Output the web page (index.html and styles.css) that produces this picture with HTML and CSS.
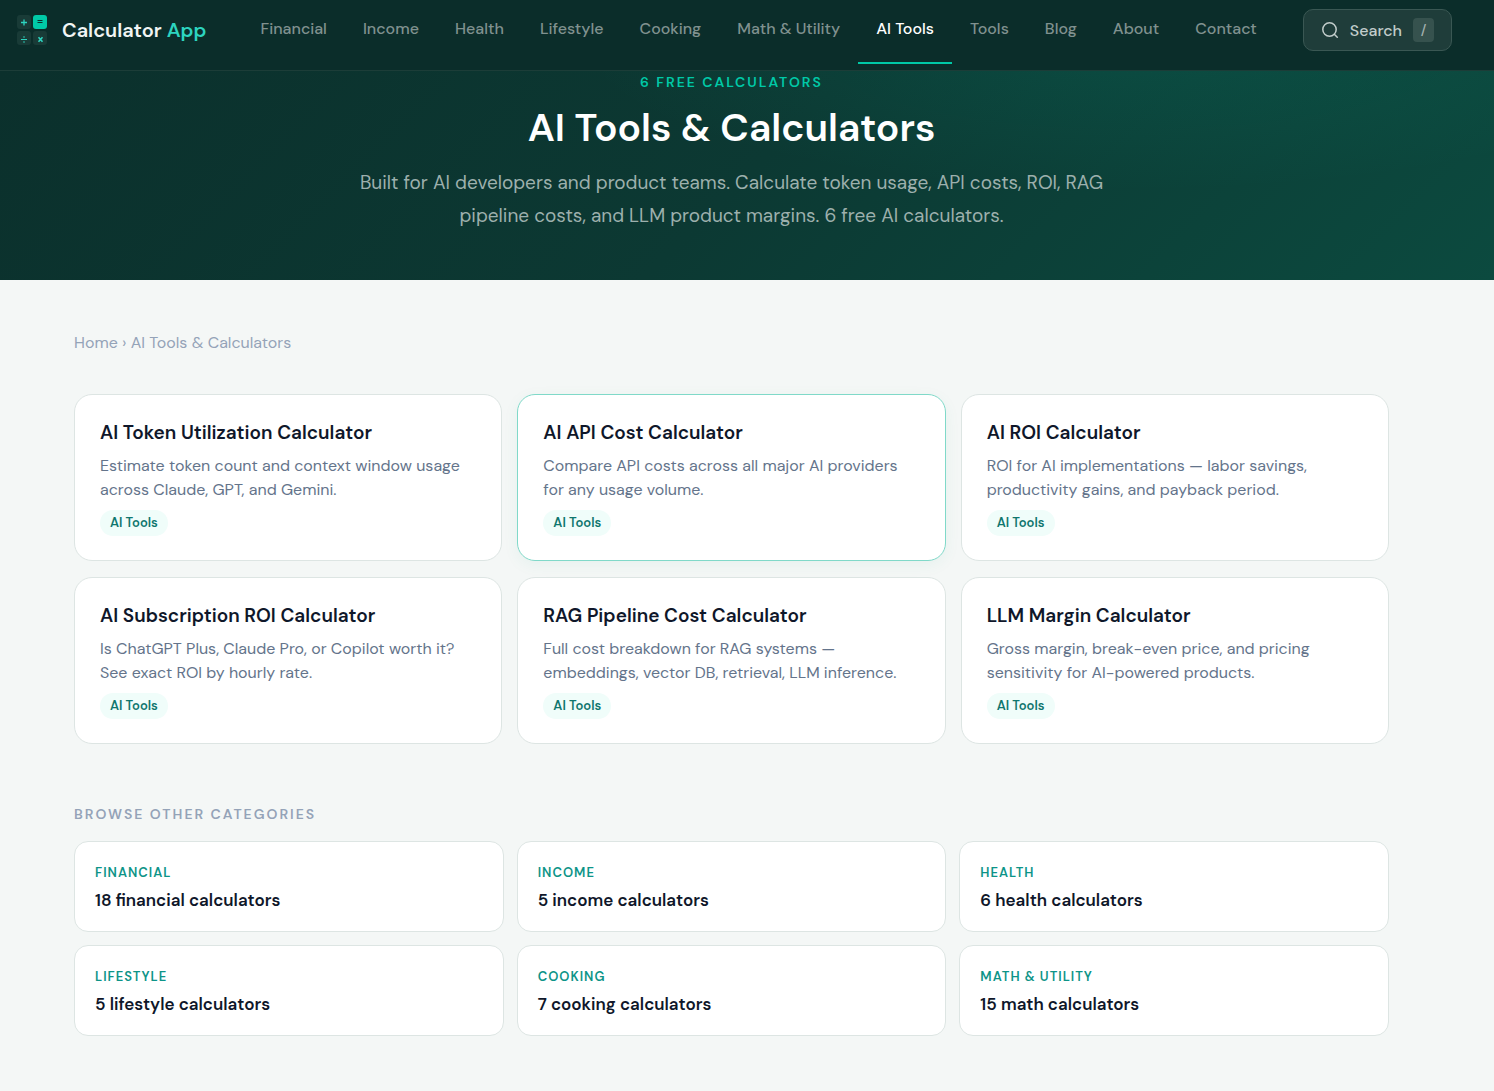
FILE: index.html
```html
<!DOCTYPE html>
<html lang="en">
<head>
    <meta charset="utf-8">
    <meta name="viewport" content="width=device-width, initial-scale=1">
    <title>AI Tools &amp; Calculators</title>
    <link rel="stylesheet" href="styles.css">
</head>
<body>
<header class="site-header">
    <a class="logo" href="#">
        <svg class="logo-icon" width="30" height="30" viewBox="0 0 30 30" aria-hidden="true">
            <g fill="#193b37">
                <rect width="14" height="14" rx="3"/>
                <rect y="16" width="14" height="14" rx="3"/>
                <rect x="16" y="16" width="14" height="14" rx="3"/>
            </g>
            <rect x="16" width="14" height="14" rx="3" fill="#00c9a7"/>
            <g stroke="#2dd4bf" fill="none">
                <path d="M4 7.500h6M7 4.500v6" stroke-width="1.300"/>
                <path d="M4 24.500h6"/>
                <path d="M21.500 22.300l4 4.500M25.500 22.300l-4 4.500" stroke-width="1.600"/>
            </g>
            <circle cx="7" cy="22" r=".8" fill="#2dd4bf"/>
            <circle cx="7" cy="27" r=".8" fill="#2dd4bf"/>
            <path d="M20.500 5.500h5M20.500 7.500h5" stroke="#0b2d2a"/>
        </svg>
        <span>Calculator <span class="logo-accent">App</span></span>
    </a>
    <nav class="main-nav">
        <a href="#">Financial</a>
        <a href="#">Income</a>
        <a href="#">Health</a>
        <a href="#">Lifestyle</a>
        <a href="#">Cooking</a>
        <a href="#">Math &amp; Utility</a>
        <a href="#" class="active">AI Tools</a>
        <a href="#">Tools</a>
        <a href="#">Blog</a>
        <a href="#">About</a>
        <a href="#">Contact</a>
    </nav>
    <button type="button" class="search-btn">
        <svg width="18" height="18" viewBox="0 0 18 18" fill="none" stroke="currentColor" stroke-width="1.500" stroke-linecap="round" aria-hidden="true">
            <circle cx="8.500" cy="8.500" r="6.700"/>
            <path d="M13.300 13.300l3 3"/>
        </svg>
        <span>Search</span>
        <kbd>/</kbd>
    </button>
</header>

<section class="hero">
    <p class="hero-label">6 Free Calculators</p>
    <h1>AI Tools &amp; Calculators</h1>
    <p class="hero-text">Built for AI developers and product teams. Calculate token usage, API costs, ROI, RAG pipeline costs, and LLM product margins. 6 free AI calculators.</p>
</section>

<main class="content">
    <div class="breadcrumb"><a href="#">Home</a> › AI Tools &amp; Calculators</div>

    <div class="calc-grid">
        <a class="calc-card" href="#">
            <h2>AI Token Utilization Calculator</h2>
            <p>Estimate token count and context window usage across Claude, GPT, and Gemini.</p>
            <span class="tag">AI Tools</span>
        </a>
        <a class="calc-card highlighted" href="#">
            <h2>AI API Cost Calculator</h2>
            <p>Compare API costs across all major AI providers for any usage volume.</p>
            <span class="tag">AI Tools</span>
        </a>
        <a class="calc-card" href="#">
            <h2>AI ROI Calculator</h2>
            <p>ROI for AI implementations — labor savings, productivity gains, and payback period.</p>
            <span class="tag">AI Tools</span>
        </a>
        <a class="calc-card" href="#">
            <h2>AI Subscription ROI Calculator</h2>
            <p>Is ChatGPT Plus, Claude Pro, or Copilot worth it? See exact ROI by hourly rate.</p>
            <span class="tag">AI Tools</span>
        </a>
        <a class="calc-card" href="#">
            <h2>RAG Pipeline Cost Calculator</h2>
            <p>Full cost breakdown for RAG systems — embeddings, vector DB, retrieval, LLM inference.</p>
            <span class="tag">AI Tools</span>
        </a>
        <a class="calc-card" href="#">
            <h2>LLM Margin Calculator</h2>
            <p>Gross margin, break-even price, and pricing sensitivity for AI-powered products.</p>
            <span class="tag">AI Tools</span>
        </a>
    </div>

    <h2 class="section-label">Browse Other Categories</h2>
    <div class="cat-grid">
        <a class="cat-card" href="#"><span class="cat-name">Financial</span><span class="cat-count">18 financial calculators</span></a>
        <a class="cat-card" href="#"><span class="cat-name">Income</span><span class="cat-count">5 income calculators</span></a>
        <a class="cat-card" href="#"><span class="cat-name">Health</span><span class="cat-count">6 health calculators</span></a>
        <a class="cat-card" href="#"><span class="cat-name">Lifestyle</span><span class="cat-count">5 lifestyle calculators</span></a>
        <a class="cat-card" href="#"><span class="cat-name">Cooking</span><span class="cat-count">7 cooking calculators</span></a>
        <a class="cat-card" href="#"><span class="cat-name">Math &amp; Utility</span><span class="cat-count">15 math calculators</span></a>
    </div>
</main>
</body>
</html>
```
FILE: styles.css
```css
* {
    box-sizing: border-box;
}

body, h1, h2, p {
    margin: 0;
}

body {
    background: #f4f7f6;
    color: #0f172a;
    font-family: "DM Sans", Inter, "Liberation Sans", sans-serif;
    font-size: 16px;
}

a {
    color: inherit;
    text-decoration: none;
}

/* header */
.site-header {
    display: flex;
    height: 71px;
    padding: 0 42px 10px 17px;
    background: #0b2d2a;
    border-bottom: 1px solid #1c3d38;
}

.logo {
    display: flex;
    align-items: center;
    gap: 15px;
    color: #f1f5f4;
    font-size: 20px;
    font-weight: 600;
    white-space: nowrap;
}

.logo-accent {
    color: #2dd4bf;
}

.main-nav {
    display: flex;
    margin: 0 28px 0 auto;
}

.main-nav a {
    height: 64px;
    padding: 0 18px;
    border-bottom: 2px solid transparent;
    color: #80918f;
    font-size: 16px;
    font-weight: 500;
    line-height: 57px;
    white-space: nowrap;
}

.main-nav a.active {
    border-color: #00c9a7;
    color: #fff;
}

.search-btn {
    display: flex;
    align-items: center;
    gap: 11px;
    height: 42px;
    margin-top: 9px;
    padding: 0 17px;
    background: #1f3d3a;
    border: 1px solid #3a5753;
    border-radius: 10px;
    color: #c2cdcb;
    font-family: inherit;
    font-size: 16px;
    font-weight: 500;
}

.search-btn kbd {
    width: 21px;
    padding: 2px 0;
    background: #36524e;
    border-radius: 4px;
    color: #a3b1af;
    font-family: inherit;
    font-size: 14px;
    line-height: 20px;
    text-align: center;
}

/* hero */
.hero {
    padding: 0 31px 48px 0;
    background: radial-gradient(ellipse 560px 150px at 76% -30px, rgba(0, 201, 167, .1), transparent),
                linear-gradient(135deg, #0b302c 0%, #0c3933 50%, #0c4a3f 100%);
    text-align: center;
}

.hero-label {
    color: #00c9a7;
    font-size: 14px;
    font-weight: 600;
    letter-spacing: 2px;
    line-height: 22px;
    text-transform: uppercase;
}

.hero h1 {
    margin: 10px 0 13px;
    color: #fff;
    font-size: 39px;
    font-weight: 600;
    line-height: 50px;
}

.hero-text {
    max-width: 780px;
    margin: 0 auto;
    color: #9db0ad;
    font-size: 19px;
    line-height: 33px;
}

/* content */
.content {
    padding: 50px 105px 55px 74px;
}

.breadcrumb {
    margin-bottom: 39px;
    color: #94a3b8;
    font-size: 16px;
    line-height: 25px;
}

.calc-grid,
.cat-grid {
    display: grid;
    grid-template-columns: repeat(3, 1fr);
}

.calc-grid {
    gap: 16px 15px;
}

.calc-card {
    padding: 25px 25px 24px;
    background: #fff;
    border: 1px solid #dde5e3;
    border-radius: 18px;
}

.calc-card.highlighted {
    border-color: #80d9c9;
    box-shadow: 0 4px 16px rgba(0, 150, 125, .06);
}

.calc-card h2 {
    margin-bottom: 9px;
    font-size: 19px;
    font-weight: 600;
    line-height: 25px;
}

.calc-card p {
    margin-bottom: 8px;
    color: #64748b;
    font-size: 16px;
    line-height: 24px;
}

.tag {
    display: inline-block;
    padding: 0 10px;
    background: #f0fdfa;
    border-radius: 13px;
    color: #0f766e;
    font-size: 13px;
    font-weight: 600;
    line-height: 26px;
    vertical-align: top;
}

.section-label {
    margin: 58px 0 14px;
    color: #94a3b8;
    font-size: 14px;
    font-weight: 600;
    letter-spacing: 2px;
    line-height: 25px;
    text-transform: uppercase;
}

.cat-grid {
    gap: 13px;
}

.cat-card {
    display: flex;
    flex-direction: column;
    gap: 3px;
    padding: 20px 20px 18px;
    background: #fff;
    border: 1px solid #dde5e3;
    border-radius: 14px;
}

.cat-name {
    color: #0d9488;
    font-size: 13px;
    font-weight: 600;
    letter-spacing: 1px;
    line-height: 22px;
    text-transform: uppercase;
}

.cat-count {
    font-size: 17px;
    font-weight: 600;
    line-height: 26px;
}
```
